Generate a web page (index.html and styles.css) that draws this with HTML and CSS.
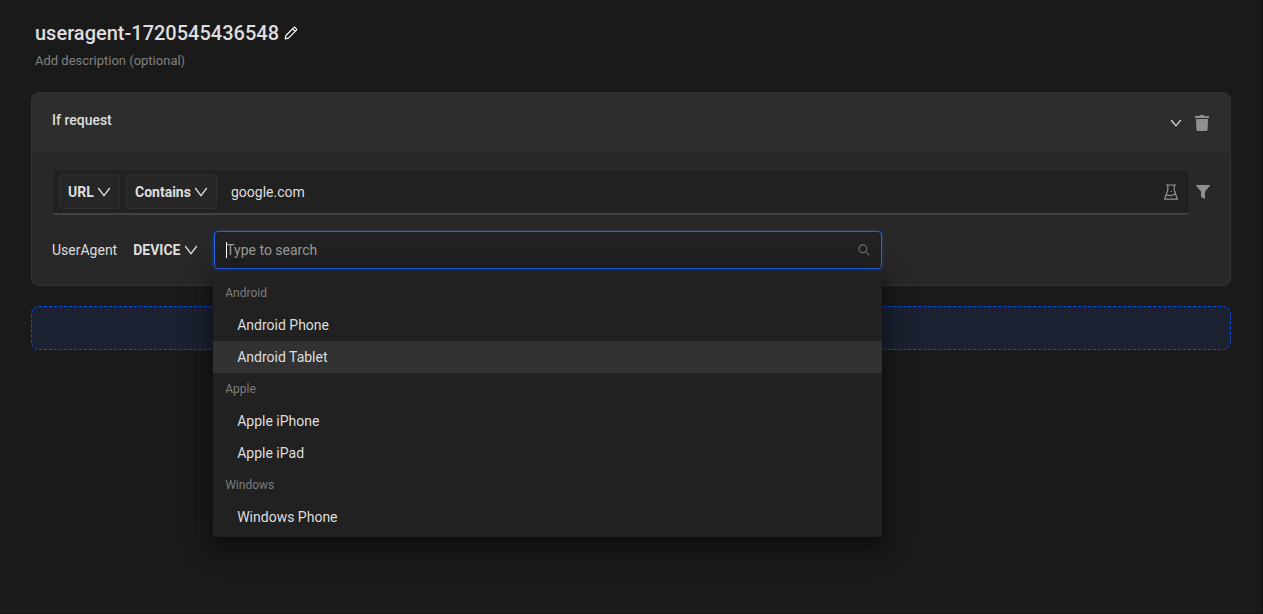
FILE: index.html
```html
<!DOCTYPE html>
<html lang="en">
<head>
<meta charset="utf-8">
<title>User agent rule</title>
<link rel="stylesheet" href="styles.css">
</head>
<body>
<main class="page">
  <header class="rule-head">
    <div class="title-row">
      <h1 class="title">useragent-1720545436548</h1>
      <button class="icon-btn" type="button" aria-label="Rename rule">
        <svg width="14" height="14" viewBox="0 0 14 14" fill="none" stroke="#fff" stroke-width="1.2" stroke-linejoin="round"><path d="M1.2 12.8l.7-3.3 7.9-7.9a1 1 0 0 1 1.4 0l1.2 1.2a1 1 0 0 1 0 1.4l-7.9 7.9zM8.6 2.8l2.6 2.6"/></svg>
      </button>
    </div>
    <p class="description">Add description (optional)</p>
  </header>

  <section class="card">
    <div class="card-head">
      <h2 class="card-title">If request</h2>
      <div class="card-actions">
        <button class="icon-btn" type="button" aria-label="Collapse">
          <svg width="12" height="12" viewBox="0 0 12 12" fill="none" stroke="#dedede" stroke-width="1.2"><path d="M1.2 3L6 8.8 10.8 3"/></svg>
        </button>
        <button class="icon-btn" type="button" aria-label="Delete">
          <svg width="14" height="16" viewBox="0 0 14 16" fill="#8f8f92"><path d="M0 1h4.4l.9-1h3.4l.9 1H14v2H0zM1 4h12l-.4 10.4A1.6 1.6 0 0 1 11 16H3a1.6 1.6 0 0 1-1.6-1.6z"/></svg>
        </button>
      </div>
    </div>
    <div class="card-body">
      <div class="source-row">
        <div class="source-group">
          <div class="picker boxed">
            <select class="picker-select" aria-label="Request part"><option>URL</option></select>
            <svg class="chevron" width="14" height="14" viewBox="0 0 14 14"><path d="M1.2 3L7 10.6 12.8 3"/></svg>
          </div>
          <div class="picker boxed">
            <select class="picker-select" aria-label="Operator"><option>Contains</option></select>
            <svg class="chevron" width="14" height="14" viewBox="0 0 14 14"><path d="M1.2 3L7 10.6 12.8 3"/></svg>
          </div>
          <input class="source-input" type="text" value="google.com" aria-label="Request value">
          <button class="icon-btn" type="button" aria-label="Test condition">
            <svg width="14" height="16" viewBox="0 0 14 16" fill="none" stroke="#929292" stroke-width="1.2" stroke-linejoin="round"><path d="M2 1h10M3.800 1v5L.6 15.2h12.800L10.200 6V1M2.200 11.600c2-1.400 3.400.6 5.400-.2 1.200-.5 2-1.300 3.800-1.300M6.500 7.500h1.500"/></svg>
          </button>
        </div>
        <button class="icon-btn" type="button" aria-label="Add filter">
          <svg width="14" height="14" viewBox="0 0 14 14" fill="#8f8f92"><path d="M.6 0h12.8q.8.2.4.9L9 6.6V14L5 12V6.600L.2.9Q-.2.200.600 0z"/></svg>
        </button>
      </div>

      <div class="agent-row">
        <label class="agent-label" for="agent-search">UserAgent</label>
        <div class="picker">
          <select class="picker-select" aria-label="User agent type"><option>DEVICE</option></select>
          <svg class="chevron" width="14" height="14" viewBox="0 0 14 14"><path d="M1.2 3L7 10.600 12.800 3"/></svg>
        </div>
        <div class="combo">
          <div class="combo-box">
            <span class="caret"></span>
            <input class="combo-input" id="agent-search" type="text" placeholder="Type to search" role="combobox" aria-expanded="true" aria-controls="agent-list">
            <svg width="12" height="12" viewBox="0 0 12 12" fill="none" stroke="#6b6b6b" stroke-width="1.2"><circle cx="4.800" cy="4.800" r="3.900"/><path d="M7.600 7.600l3.700 3.700"/></svg>
          </div>
          <div class="menu" id="agent-list" role="listbox" aria-label="Devices">
            <div class="menu-group">Android</div>
            <div class="menu-item" role="option">Android Phone</div>
            <div class="menu-item active" role="option">Android Tablet</div>
            <div class="menu-group">Apple</div>
            <div class="menu-item" role="option">Apple iPhone</div>
            <div class="menu-item" role="option">Apple iPad</div>
            <div class="menu-group">Windows</div>
            <div class="menu-item" role="option">Windows Phone</div>
          </div>
        </div>
        <div class="agent-rest"></div>
      </div>
    </div>
  </section>

  <button class="add-condition" type="button" aria-label="Add condition"></button>
</main>
</body>
</html>
```
FILE: styles.css
```css
* {
  box-sizing: border-box;
}

body {
  margin: 0;
  background: #1a1a1a;
  color: #dedede;
  font: 14px/22px Roboto, "Liberation Sans", sans-serif;
}

.page {
  min-height: 100vh;
  padding: 20px 31px;
  border-right: 1px solid #101010;
  border-bottom: 1px solid #141012;
}

.rule-head {
  padding: 0 4px;
}

.title-row {
  display: flex;
  align-items: center;
  gap: 5px;
}

.title {
  margin: 0;
  font-size: 20px;
  line-height: 26px;
  font-weight: 500;
}

.description {
  margin: 4px 0 0;
  color: #808080;
  font-size: 13px;
  line-height: 22px;
}

.icon-btn {
  display: flex;
  flex: none;
  padding: 0;
  border: 0;
  background: none;
  cursor: pointer;
}

.card {
  margin-top: 20px;
  border: 1px solid #333;
  border-radius: 8px;
  background: #282828;
}

.card-head {
  display: flex;
  justify-content: space-between;
  align-items: center;
  height: 60px;
  padding: 0 21px 0 20px;
  border-radius: 7px 7px 0 0;
  background: #2d2d2d;
}

.card-title {
  margin: 0;
  padding-bottom: 6px;
  font-size: 14px;
  font-weight: 500;
}

.card-actions {
  display: flex;
  align-items: center;
  gap: 13px;
}

.card-body {
  padding: 16px 20px;
}

.source-row {
  display: flex;
  align-items: center;
  gap: 6px;
}

.source-group {
  display: flex;
  flex: 1;
  align-items: center;
  gap: 6px;
  height: 46px;
  padding: 0 11px 0 6px;
  border: 1px solid #2b2b2b;
  border-bottom: 2px solid #424242;
  border-radius: 4px;
  background: #212121;
}

.picker {
  display: flex;
  flex: none;
  align-items: center;
  gap: 3px;
}

.boxed {
  height: 35px;
  padding: 0 8px;
  border: 1px solid #303030;
  border-radius: 4px;
  background: #262626;
}

.picker-select {
  appearance: none;
  padding: 0;
  border: 0;
  background: none;
  color: inherit;
  font: inherit;
  font-weight: 700;
}

.chevron {
  fill: none;
  stroke: #dedede;
  stroke-width: 1.3;
}

.source-input,
.combo-input {
  flex: 1;
  min-width: 0;
  padding: 0;
  border: 0;
  outline: 0;
  background: none;
  color: inherit;
  font: inherit;
}

.source-input {
  padding-left: 8px;
}

.agent-row {
  display: flex;
  align-items: center;
  gap: 16px;
  margin-top: 16px;
}

.combo {
  position: relative;
  flex: 15;
}

.agent-rest {
  flex: 7;
}

.combo-box {
  position: relative;
  display: flex;
  align-items: center;
  height: 38px;
  padding: 0 11px;
  border: 1px solid #2467f0;
  border-radius: 4px;
  background: #212121;
  box-shadow: 0 0 0 2px #22304c;
}

.combo-input::placeholder {
  color: #999;
  opacity: 1;
}

.caret {
  position: absolute;
  left: 11px;
  width: 1px;
  height: 16px;
  background: #fff;
}

.menu {
  position: absolute;
  z-index: 1;
  top: 40px;
  left: -1px;
  right: 0;
  padding: 6px 0 4px;
  border-radius: 4px;
  background: #212121;
  box-shadow: 0 6px 16px rgba(0, 0, 0, 0.4), 0 9px 28px 8px rgba(0, 0, 0, 0.2);
}

.menu-group,
.menu-item {
  padding: 5px 12px;
}

.menu-group {
  color: #7d7d7d;
  font-size: 12px;
}

.menu-item {
  padding-left: 24px;
}

.active {
  background: #323232;
}

.add-condition {
  display: block;
  width: 100%;
  height: 44px;
  margin-top: 20px;
  border: 1px dashed #0a4fe8;
  border-radius: 8px;
  background: #1b2130;
}
```
